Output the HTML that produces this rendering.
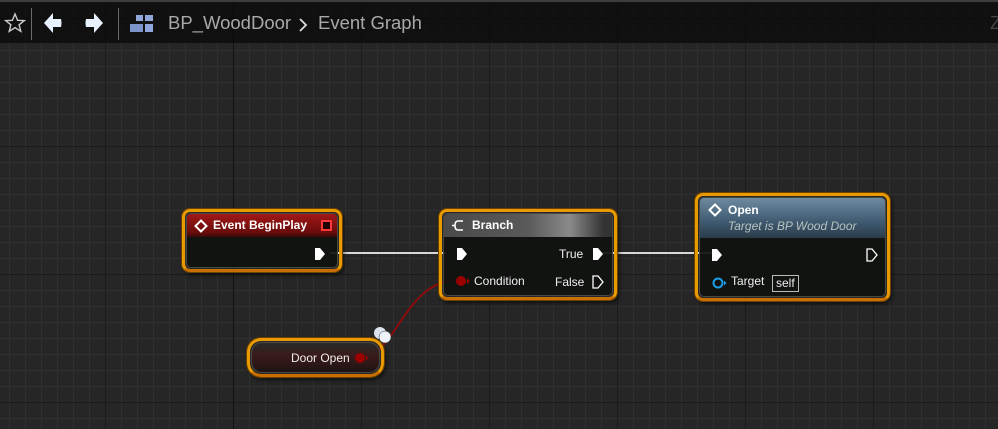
<!DOCTYPE html>
<html><head><meta charset="utf-8"><style>
*{margin:0;padding:0;box-sizing:border-box}
body{width:998px;height:429px;overflow:hidden;position:relative;font-family:"Liberation Sans","DejaVu Sans",sans-serif;
background-color:#262626;
background-image:
linear-gradient(90deg,#111 0,#111 1px,transparent 1px),
linear-gradient(0deg,#111 0,#111 1px,transparent 1px),
linear-gradient(90deg,#1b1b1b 0,#1b1b1b 1px,transparent 1px),
linear-gradient(0deg,#1b1b1b 0,#1b1b1b 1px,transparent 1px),
linear-gradient(90deg,#303030 0,#303030 1px,transparent 1px),
linear-gradient(0deg,#303030 0,#303030 1px,transparent 1px);
background-size:998px 429px,998px 429px,128px 128px,128px 128px,16px 16px,16px 16px;
background-position:233px 0,0 403px,105px 0,0 19px,9px 0,0 3px;
background-repeat:no-repeat,no-repeat,repeat,repeat,repeat,repeat}
.tb{position:absolute;left:0;top:0;width:998px;height:43px;background:rgba(8,8,8,.72);border-top:2px solid #3d3d3d}
.sep{position:absolute;top:6px;width:1px;height:32px;background:#6a6a6a}
.ttl{position:absolute;top:10px;font-size:18.5px;color:#a9a9a9}
.node{position:absolute;border:3px solid #e89a00;border-bottom-color:#c86f00;border-radius:8px;box-shadow:0 0 0 1px #6b4200,2px 3px 4px rgba(0,0,0,.6)}
.in{position:absolute;inset:1px;border-radius:5px;background:rgba(16,18,16,.93);border:1px solid #4a4a44;overflow:hidden}
.hd{position:absolute;left:0;right:0;top:0;color:#fff;font-weight:bold;font-size:12px}
.t{position:absolute;color:#eee;font-size:12px}
svg{position:absolute}
</style></head><body>
<div class="tb">
<svg style="left:4px;top:10px" width="22" height="22" viewBox="0 0 22 22"><path d="M11 2 L13.6 8.3 L20.3 8.6 L15.1 12.8 L16.8 19.3 L11 15.6 L5.2 19.3 L6.9 12.8 L1.7 8.6 L8.4 8.3Z" fill="none" stroke="#ccc" stroke-width="1.4"/></svg>
<div class="sep" style="left:31px"></div>
<svg style="left:43px;top:9px" width="20" height="24" viewBox="0 0 20 24"><path d="M1 12 L10 2 L10 8 L18 8 Q19 12 18 16 L10 16 L10 22Z" fill="#e8f2ff"/></svg>
<svg style="left:84px;top:9px" width="20" height="24" viewBox="0 0 20 24"><path d="M19 12 L10 2 L10 8 L2 8 Q1 12 2 16 L10 16 L10 22Z" fill="#e8f2ff"/></svg>
<div class="sep" style="left:118px"></div>
<svg style="left:130px;top:12px" width="24" height="20" viewBox="0 0 24 20"><rect x="6" y="1" width="7" height="6" fill="#8fa6dc"/><rect x="15" y="1" width="8" height="6" fill="#8fa6dc"/><rect x="0" y="10" width="13" height="8" fill="#7c93cc"/><rect x="15" y="10" width="8" height="8" fill="#8fa6dc"/></svg>
<div class="ttl" style="left:168px">BP_WoodDoor</div>
<svg style="left:298px;top:15px" width="10" height="16" viewBox="0 0 10 16"><path d="M2 2 L8 8 L2 14" fill="none" stroke="#ddd" stroke-width="1.8"/></svg>
<div class="ttl" style="left:318px">Event Graph</div>
<div class="ttl" style="left:990px;color:#444">Z</div>
</div>

<svg style="left:0;top:0" width="998" height="429">
<line x1="330" y1="253" x2="446" y2="253" stroke="#d8d8d8" stroke-width="2"/>
<line x1="600" y1="253" x2="712" y2="253" stroke="#d8d8d8" stroke-width="2"/>
<path d="M362 357 C 395 357, 405 280, 458 280" fill="none" stroke="#8a0c0c" stroke-width="2"/>
</svg>

<div class="node" style="left:182px;top:209px;width:160px;height:63px">
<div class="in">
<div class="hd" style="height:23px;background:linear-gradient(180deg,#a11818,#6a0c0c 80%,#3a0a0a)">
<svg style="left:7px;top:5px" width="14" height="14" viewBox="0 0 14 14"><path d="M7 1.5 L12.5 7 L7 12.5 L1.5 7Z" fill="none" stroke="#fff" stroke-width="2"/></svg>
<span style="position:absolute;left:26px;top:4px">Event BeginPlay</span>
<div style="position:absolute;right:5px;top:6px;width:11px;height:11px;border:2px solid #ff3838;background:#200"></div>
</div>
<svg style="left:127px;top:33px" width="12" height="14" viewBox="0 0 12 14"><path d="M1 1 H6 L11 7 L6 13 H1Z" fill="#fff"/></svg>
</div></div>

<div class="node" style="left:439px;top:209px;width:178px;height:91px">
<div class="in">
<div class="hd" style="height:23px;background:linear-gradient(90deg,#4a4a4a,#5a5a5a 50%,#8a8a8a 75%,#333 95%)">
<svg style="left:8px;top:4px" width="16" height="15" viewBox="0 0 16 15"><path d="M11 3 H6 Q3 3 3 7.5 Q3 12 6 12 H11 M0 7.5 H3" fill="none" stroke="#fff" stroke-width="1.6"/></svg>
<span style="position:absolute;left:28px;top:4px">Branch</span>
</div>
<svg style="left:12px;top:33px" width="12" height="14" viewBox="0 0 12 14"><path d="M1 1 H6 L11 7 L6 13 H1Z" fill="#fff"/></svg>
<div class="t" style="left:115px;top:33px">True</div>
<svg style="left:148px;top:33px" width="12" height="14" viewBox="0 0 12 14"><path d="M1 1 H6 L11 7 L6 13 H1Z" fill="#fff"/></svg>
<svg style="left:11px;top:61px" width="16" height="12" viewBox="0 0 16 12"><circle cx="6" cy="6" r="5" fill="#9a0000"/><path d="M12 3 L15 6 L12 9Z" fill="#9a0000"/></svg>
<div class="t" style="left:30px;top:60px">Condition</div>
<div class="t" style="left:111px;top:61px">False</div>
<svg style="left:148px;top:61px" width="12" height="14" viewBox="0 0 12 14"><path d="M1 1 H6 L11 7 L6 13 H1Z" fill="none" stroke="#fff" stroke-width="1.3"/></svg>
</div></div>

<div class="node" style="left:695px;top:193px;width:195px;height:108px">
<div class="in">
<div class="hd" style="height:40px;background:linear-gradient(180deg,#6d8aa0,#3f5a70 60%,#2a3b48)">
<svg style="left:8px;top:5px" width="14" height="14" viewBox="0 0 14 14"><path d="M7 1.5 L12.5 7 L7 12.5 L1.5 7Z" fill="none" stroke="#fff" stroke-width="2"/></svg>
<span style="position:absolute;left:28px;top:5px">Open</span>
<span style="position:absolute;left:28px;top:21px;font-weight:normal;font-style:italic;color:#b8c2c0">Target is BP Wood Door</span>
</div>
<svg style="left:11px;top:50px" width="12" height="14" viewBox="0 0 12 14"><path d="M1 1 H6 L11 7 L6 13 H1Z" fill="#fff"/></svg>
<svg style="left:166px;top:50px" width="12" height="14" viewBox="0 0 12 14"><path d="M1 1 H6 L11 7 L6 13 H1Z" fill="none" stroke="#fff" stroke-width="1.3"/></svg>
<svg style="left:12px;top:79px" width="16" height="12" viewBox="0 0 16 12"><circle cx="6" cy="6" r="4.5" fill="none" stroke="#1a9ee8" stroke-width="2"/><path d="M12 3.5 L14.5 6 L12 8.5Z" fill="#1a9ee8"/></svg>
<div class="t" style="left:31px;top:76px">Target</div>
<div class="t" style="left:72px;top:77px;border:1px solid #bbb;padding:0 3px;line-height:15px">self</div>
</div></div>

<div class="node" style="left:247px;top:338px;width:137px;height:39px;border-radius:14px">
<div class="in" style="border-radius:11px;background:linear-gradient(180deg,#2a2a2a,#3a1a1a 45%,#1e1414)">
<div class="t" style="left:39px;top:8px">Door Open</div>
<svg style="left:102px;top:9px" width="16" height="12" viewBox="0 0 16 12"><circle cx="6" cy="6" r="5" fill="#9a0000"/><path d="M12 3.5 L14.5 6 L12 8.5Z" fill="#9a0000"/></svg>
</div></div>
<svg style="left:372px;top:326px" width="24" height="20" viewBox="0 0 24 20"><circle cx="8" cy="7" r="6" fill="#dde4ee"/><circle cx="13" cy="11" r="6" fill="#eef3fa" stroke="#333" stroke-width=".5"/></svg>
</body></html>
